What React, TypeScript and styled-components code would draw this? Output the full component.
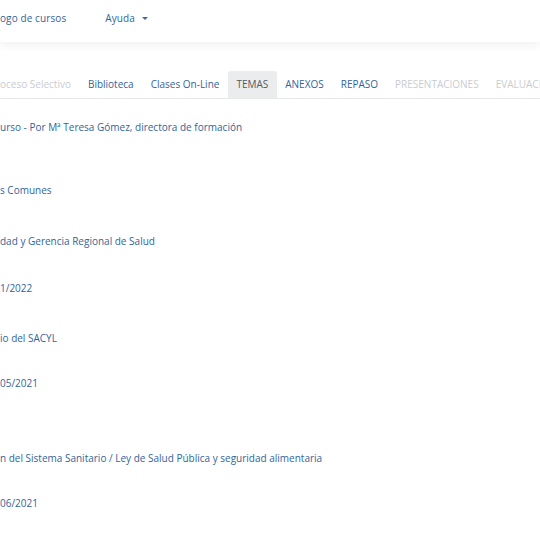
import React from "react";
import styled, { createGlobalStyle } from "styled-components";

const Global = createGlobalStyle`
  html, body { margin: 0; padding: 0; background: #ffffff; overflow: hidden; }
  body { font-family: "Open Sans", "Liberation Sans", sans-serif; }
  * { box-sizing: border-box; }
`;

const Page = styled.div`
  width: 540px;
  height: 540px;
  overflow: hidden;
  background: #fff;
`;

const Header = styled.header`
  height: 42px;
  background: #fff;
  box-shadow: 0 3px 9px rgba(0, 0, 0, 0.06);
  display: flex;
  align-items: center;
  gap: 39px;
  padding-bottom: 6px;
  position: relative;
  z-index: 1;
`;

const NavLink = styled.a`
  font-size: 10px;
  letter-spacing: 0.1px;
  color: #33649a;
  text-decoration: none;
  display: flex;
  align-items: center;
  gap: 7px;
`;

const Caret = styled.span`
  width: 0;
  height: 0;
  border-left: 3px solid transparent;
  border-right: 3px solid transparent;
  border-top: 3.5px solid #4a6a8c;
`;

const Tabs = styled.ul`
  list-style: none;
  margin: 29px 0 0;
  padding: 0;
  display: flex;
  border-bottom: 1px solid #e6e8eb;
  height: 28px;
  white-space: nowrap;
`;

const Tab = styled.li<{ $state?: "active" | "disabled" | "normal"; $first?: boolean }>`
  padding: 0 8.5px 0 ${(p) => (p.$first ? 0 : 8.5)}px;
  height: 27px;
  display: flex;
  align-items: center;
  padding-bottom: 2px;
  font-size: 10px;
  border-radius: 3px 3px 0 0;
  color: ${(p) =>
    p.$state === "active" ? "#555b61" : p.$state === "disabled" ? "#c9ccd0" : "#33649a"};
  background: ${(p) => (p.$state === "active" ? "#ebecee" : "transparent")};
`;

const Content = styled.div`
  display: flex;
  flex-direction: column;
`;

const Row = styled.a<{ $top: number }>`
  display: block;
  margin-top: ${(p) => p.$top}px;
  height: 16px;
  line-height: 16px;
  font-size: 10px;
  color: #33649a;
  text-decoration: none;
  white-space: nowrap;
`;

const rows: { text: string; top: number }[] = [
  { text: "urso - Por Mª Teresa Gómez, directora de formación", top: 20 },
  { text: "s Comunes", top: 47 },
  { text: "dad y Gerencia Regional de Salud", top: 35 },
  { text: "1/2022", top: 31 },
  { text: "io del SACYL", top: 34 },
  { text: "05/2021", top: 29 },
  { text: "n del Sistema Sanitario / Ley de Salud Pública y seguridad alimentaria", top: 59 },
  { text: "06/2021", top: 29 },
];

export default function App() {
  return (
    <Page>
      <Global />
      <Header>
        <NavLink href="#">ogo de cursos</NavLink>
        <NavLink href="#">
          Ayuda <Caret />
        </NavLink>
      </Header>
      <Tabs>
        <Tab $state="disabled" $first>oceso Selectivo</Tab>
        <Tab>Biblioteca</Tab>
        <Tab>Clases On-Line</Tab>
        <Tab $state="active">TEMAS</Tab>
        <Tab>ANEXOS</Tab>
        <Tab>REPASO</Tab>
        <Tab $state="disabled">PRESENTACIONES</Tab>
        <Tab $state="disabled">EVALUACIONES</Tab>
      </Tabs>
      <Content>
        {rows.map((r, i) => (
          <Row key={i} href="#" $top={r.top}>
            {r.text}
          </Row>
        ))}
      </Content>
    </Page>
  );
}
